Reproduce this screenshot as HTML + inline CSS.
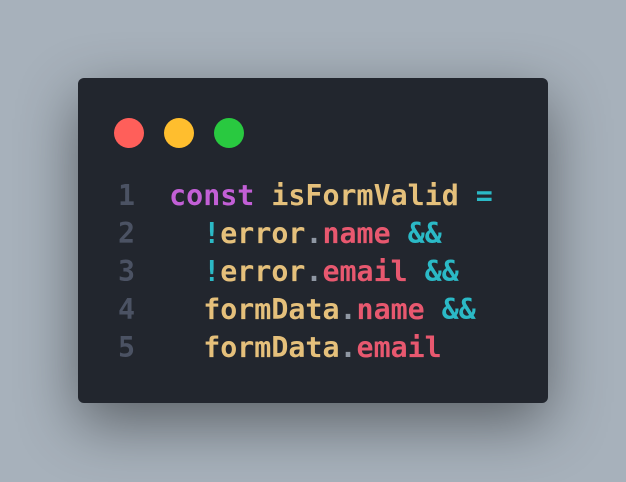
<!DOCTYPE html>
<html><head><style>
html,body{margin:0;padding:0;}
body{width:626px;height:482px;background:#a7b1bb;position:relative;overflow:hidden;}
.card{position:absolute;left:78px;top:78px;width:470px;height:325px;background:#22262e;border-radius:6px;box-shadow:0 20px 60px rgba(0,0,0,0.45);}
.dot{position:absolute;top:40px;width:30px;height:30px;border-radius:50%;}
pre{position:absolute;left:40px;top:99px;margin:0;font-family:"DejaVu Sans Mono","Liberation Mono",monospace;font-weight:bold;font-size:28.3px;line-height:38px;color:#e5c07b;letter-spacing:0;}
.n{color:#4b5263}.k{color:#c25fd6}.y{color:#e5c07b}.c{color:#2bb9c6}.r{color:#e8586f}.g{color:#8f97a3}
</style></head><body>
<div class="card">
<div class="dot" style="left:36px;background:#ff5f5a"></div>
<div class="dot" style="left:86px;background:#ffbe2e"></div>
<div class="dot" style="left:136px;background:#29c940"></div>
<pre><span class="n">1</span>  <span class="k">const</span> isFormValid <span class="c">=</span>
<span class="n">2</span>    <span class="c">!</span>error<span class="g">.</span><span class="r">name</span> <span class="c">&amp;&amp;</span>
<span class="n">3</span>    <span class="c">!</span>error<span class="g">.</span><span class="r">email</span> <span class="c">&amp;&amp;</span>
<span class="n">4</span>    formData<span class="g">.</span><span class="r">name</span> <span class="c">&amp;&amp;</span>
<span class="n">5</span>    formData<span class="g">.</span><span class="r">email</span></pre>
</div>
</body></html>
